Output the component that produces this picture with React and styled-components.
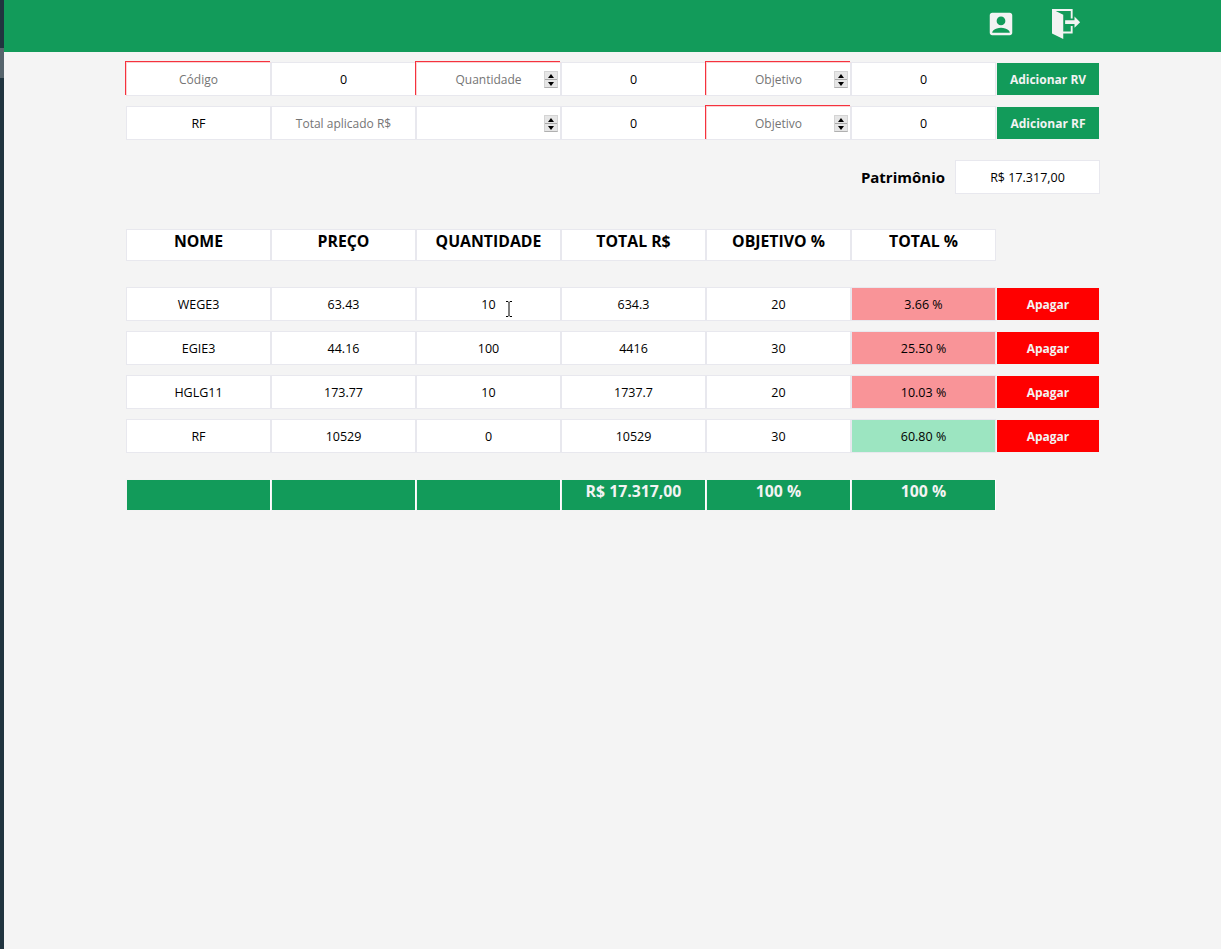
import styled, { createGlobalStyle, css } from "styled-components";
import { MdAccountBox } from "react-icons/md";
import { ImExit } from "react-icons/im";

const GlobalStyle = createGlobalStyle`
  html, body {
    margin: 0;
    padding: 0;
    background: #f4f4f4;
  }

  * {
    box-sizing: border-box;
  }

  body {
    font-family: "Open Sans", "Noto Sans", sans-serif;
    color: #000;
  }
`;

const Page = styled.div`
  display: flex;
  min-height: 949px;
`;

const WindowEdge = styled.div`
  width: 4px;
  flex: none;
  display: flex;
  flex-direction: column;
  background: #20343f;
`;

const EdgeSpacer = styled.div`
  height: 48px;
`;

const EdgeHighlight = styled.div`
  height: 30px;
  background: #56646c;
`;

const Main = styled.div`
  flex: 1;
  min-width: 0;
`;

const Header = styled.header`
  height: 52px;
  display: flex;
  align-items: center;
  justify-content: flex-end;
  gap: 36px;
  padding: 0 139px 5px 0;
  background: #129b5a;
  color: #f3f3f3;

  svg {
    display: block;
  }
`;

const Content = styled.main`
  width: 974px;
  margin-left: 122px;
  padding-top: 10px;
`;

const Row = styled.div`
  display: grid;
  grid-template-columns: repeat(6, 145px) 104px;
  height: ${(p) => p.$height || 34}px;
  margin-top: ${(p) => p.$gap || 0}px;
`;

const cellBox = css`
  height: 100%;
  background: #fff;
  border: 1px solid #e8e8ee;
`;

const invalidBox = css`
  border-top-color: #fbd0d2;
  border-left-color: #fbd0d2;
  box-shadow: -1px -1px 0 #f5323d;
`;

const Cell = styled.div`
  ${cellBox}
  display: flex;
  align-items: center;
  justify-content: center;
  font-size: 12.5px;
  background: ${(p) => p.$bg || "#fff"};
  position: relative;
`;

const FieldWrap = styled.div`
  position: relative;
  height: 100%;
`;

const Field = styled.input`
  ${cellBox}
  ${(p) => p.$invalid && invalidBox}
  display: block;
  width: 100%;
  padding: 0;
  outline: none;
  text-align: center;
  font-family: inherit;
  font-size: 12.5px;
  color: #000;

  &::placeholder {
    font-size: 12px;
    color: #757575;
    opacity: 1;
  }
`;

const Spinner = styled.div`
  position: absolute;
  top: 9px;
  right: 3px;
  width: 14px;
  height: 17px;
  display: flex;
  flex-direction: column;
  gap: 1px;
  border: 1px solid #d4d4d4;
  border-bottom-color: #b0b0b0;
  background: #a8a8a8;
`;

const SpinButton = styled.span`
  flex: 1;
  display: flex;
  align-items: center;
  justify-content: center;
  background: #e6e6e6;

  &::before {
    content: "";
    border-left: 3.5px solid transparent;
    border-right: 3.5px solid transparent;
    ${(p) =>
      p.$down
        ? "border-top: 4px solid #000;"
        : "border-bottom: 4px solid #000;"}
  }
`;

const ActionButton = styled.button`
  height: 100%;
  padding: 0;
  border: 1px solid #f3f3f3;
  background: ${(p) => (p.$danger ? "#ff0000" : "#129b5a")};
  color: #f3f3f3;
  font-family: inherit;
  font-size: 12px;
  font-weight: 700;
`;

const Summary = styled.div`
  display: flex;
  align-items: center;
  justify-content: flex-end;
  gap: 10px;
  height: 34px;
  margin-top: 20px;
`;

const SummaryLabel = styled.span`
  font-size: 15px;
  font-weight: 700;
`;

const SummaryValue = styled(Cell)`
  width: 145px;
  flex: none;
`;

const HeadCell = styled(Cell)`
  font-size: 15.8px;
  font-weight: 700;
  align-items: flex-start;
`;

const TotalCell = styled.div`
  height: 100%;
  display: flex;
  justify-content: center;
  background: #129b5a;
  border: 1px solid #f3f3f3;
  border-right-color: #fff;
  color: #f3f3f3;
  font-size: 15.8px;
  font-weight: 700;
`;

const TextCursor = styled.svg`
  position: absolute;
  left: 88px;
  top: 13px;
`;

const assets = [
  { name: "WEGE3", price: "63.43", qty: "10", total: "634.3", goal: "20", pct: "3.66 %", bg: "#f99498" },
  { name: "EGIE3", price: "44.16", qty: "100", total: "4416", goal: "30", pct: "25.50 %", bg: "#f99498" },
  { name: "HGLG11", price: "173.77", qty: "10", total: "1737.7", goal: "20", pct: "10.03 %", bg: "#f99498" },
  { name: "RF", price: "10529", qty: "0", total: "10529", goal: "30", pct: "60.80 %", bg: "#9ce5c1" },
];

const heads = ["NOME", "PREÇO", "QUANTIDADE", "TOTAL R$", "OBJETIVO %", "TOTAL %"];

function NumberField({ placeholder, invalid, value }) {
  return (
    <FieldWrap>
      <Field $invalid={invalid} placeholder={placeholder} defaultValue={value} />
      <Spinner>
        <SpinButton />
        <SpinButton $down />
      </Spinner>
    </FieldWrap>
  );
}

export default function App() {
  return (
    <Page>
      <GlobalStyle />
      <WindowEdge>
        <EdgeSpacer />
        <EdgeHighlight />
      </WindowEdge>
      <Main>
        <Header>
          <MdAccountBox size={30} />
          <ImExit size={30} />
        </Header>
        <Content>
          <Row>
            <FieldWrap>
              <Field $invalid placeholder="Código" />
            </FieldWrap>
            <Field defaultValue="0" />
            <NumberField invalid placeholder="Quantidade" />
            <Field defaultValue="0" />
            <NumberField invalid placeholder="Objetivo" />
            <Field defaultValue="0" />
            <ActionButton>Adicionar RV</ActionButton>
          </Row>
          <Row $gap={10}>
            <Field defaultValue="RF" />
            <Field placeholder="Total aplicado R$" />
            <NumberField />
            <Field defaultValue="0" />
            <NumberField invalid placeholder="Objetivo" />
            <Field defaultValue="0" />
            <ActionButton>Adicionar RF</ActionButton>
          </Row>

          <Summary>
            <SummaryLabel>Patrimônio</SummaryLabel>
            <SummaryValue>R$ 17.317,00</SummaryValue>
          </Summary>

          <Row $height={32} $gap={35}>
            {heads.map((head) => (
              <HeadCell key={head}>{head}</HeadCell>
            ))}
          </Row>

          {assets.map((asset, i) => (
            <Row key={asset.name} $gap={i === 0 ? 26 : 10}>
              <Cell>{asset.name}</Cell>
              <Cell>{asset.price}</Cell>
              <Cell>
                {asset.qty}
                {i === 0 && (
                  <TextCursor width="8" height="16" viewBox="0 0 8 16">
                    <path d="M1 .5h2l1 1 1-1h2M4 1.5v13M1 15.5h2l1-1 1 1h2" fill="none" stroke="#000" />
                  </TextCursor>
                )}
              </Cell>
              <Cell>{asset.total}</Cell>
              <Cell>{asset.goal}</Cell>
              <Cell $bg={asset.bg}>{asset.pct}</Cell>
              <ActionButton $danger>Apagar</ActionButton>
            </Row>
          ))}

          <Row $height={32} $gap={26}>
            <TotalCell />
            <TotalCell />
            <TotalCell />
            <TotalCell>R$ 17.317,00</TotalCell>
            <TotalCell>100 %</TotalCell>
            <TotalCell>100 %</TotalCell>
          </Row>
        </Content>
      </Main>
    </Page>
  );
}
